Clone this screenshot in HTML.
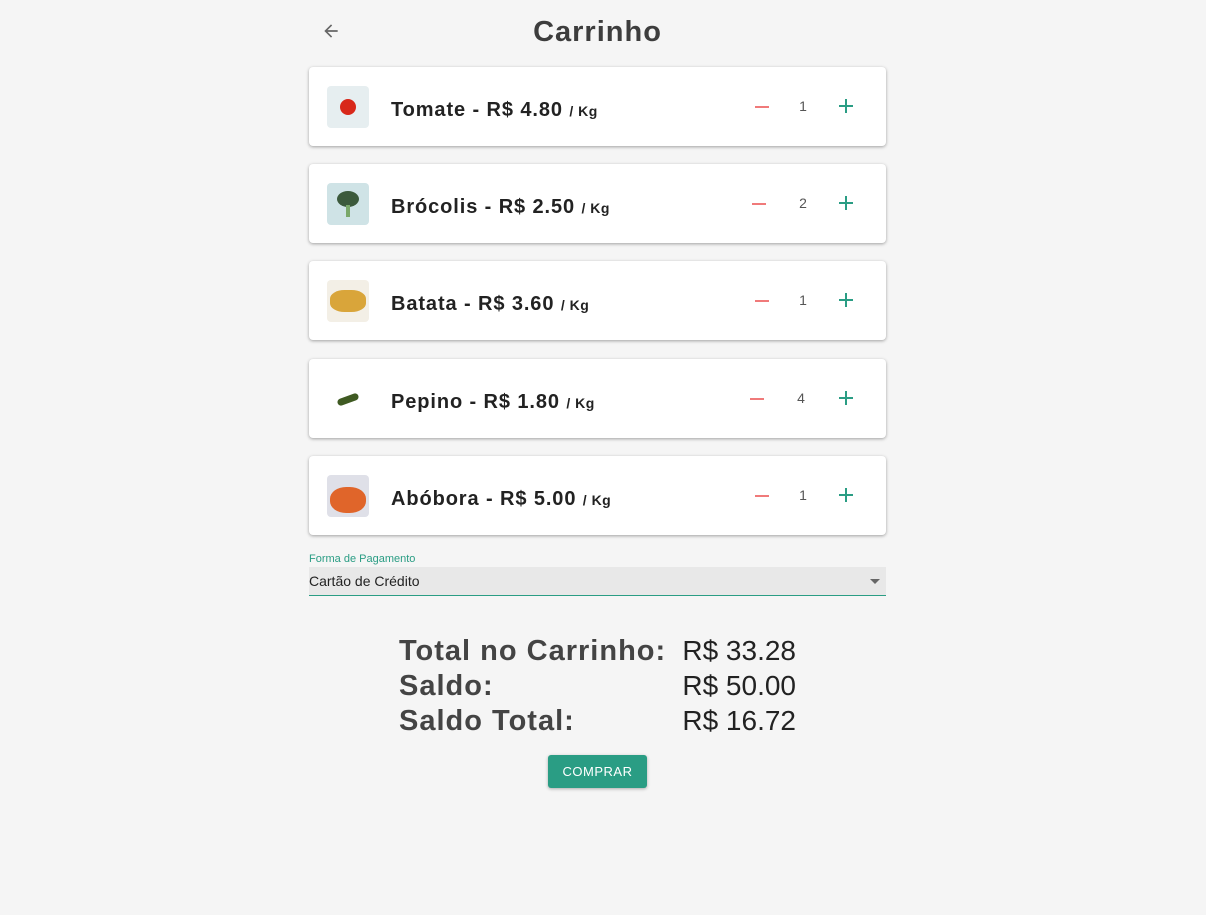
<!DOCTYPE html><html><head><meta charset="utf-8"><style>
body{margin:0;background:#f5f5f5;width:1206px;height:915px;font-family:"Liberation Sans",sans-serif;position:relative;overflow:hidden}
.a{position:absolute}
.card{position:absolute;left:309px;width:577px;height:79px;background:#fff;border-radius:4px;box-shadow:0 1px 3px rgba(0,0,0,.35)}
.img{position:absolute;left:18px;top:19px;width:42px;height:42px;border-radius:4px;background:#e6eef0;overflow:hidden}
.nm{position:absolute;left:82px;top:32px;font-size:20px;font-weight:bold;color:#222;white-space:nowrap;letter-spacing:0.9px}
.nm small{font-size:14px;letter-spacing:0.5px}
.mi{position:absolute;left:446px;top:39px;width:14px;height:2px;background:#f07a7a}
.q{position:absolute;left:488px;top:31px;font-size:14px;color:#555;width:12px;text-align:center}
.pl{position:absolute;left:530px;top:32px;width:14px;height:14px}
.pl:before{content:"";position:absolute;left:0;top:6px;width:14px;height:2px;background:#2a9d84}
.pl:after{content:"";position:absolute;left:6px;top:0;width:2px;height:14px;background:#2a9d84}
.lb{position:absolute;left:399px;font-size:29px;font-weight:bold;color:#444;letter-spacing:1px}
.vl{position:absolute;right:410px;font-size:28px;color:#222}
</style></head><body>
<svg class="a" style="left:321px;top:21px" width="20" height="20" viewBox="0 0 24 24"><path d="M20 11H7.8l5.6-5.6L12 4l-8 8 8 8 1.4-1.4L7.8 13H20z" fill="#666"/></svg>
<div class="a" style="left:0;width:1195px;top:16px;text-align:center;font-size:29px;font-weight:bold;color:#3d3d3d;letter-spacing:1px">Carrinho</div>

<div class="card" style="top:67px"><div class="img"><div class="a" style="left:13px;top:13px;width:16px;height:16px;border-radius:50%;background:#d8281a"></div></div><div class="nm">Tomate - R$ 4.80 <small>/ Kg</small></div><div class="mi"></div><div class="q">1</div><div class="pl"></div></div>
<div class="card" style="top:164px"><div class="img" style="background:#cfe3e6"><div class="a" style="left:10px;top:8px;width:22px;height:16px;border-radius:50%;background:#3c5a3c"></div><div class="a" style="left:19px;top:22px;width:4px;height:12px;background:#7aa86a"></div></div><div class="nm">Brócolis - R$ 2.50 <small>/ Kg</small></div><div class="mi" style="left:443px"></div><div class="q">2</div><div class="pl"></div></div>
<div class="card" style="top:261px"><div class="img" style="background:#f3efe6"><div class="a" style="left:3px;top:10px;width:36px;height:22px;border-radius:40%;background:#d9a53a"></div></div><div class="nm">Batata - R$ 3.60 <small>/ Kg</small></div><div class="mi"></div><div class="q">1</div><div class="pl"></div></div>
<div class="card" style="top:359px"><div class="img" style="background:#fff"><div class="a" style="left:10px;top:18px;width:22px;height:7px;border-radius:4px;background:#3f5a22;transform:rotate(-20deg)"></div></div><div class="nm">Pepino - R$ 1.80 <small>/ Kg</small></div><div class="mi" style="left:441px"></div><div class="q" style="left:486px">4</div><div class="pl"></div></div>
<div class="card" style="top:456px"><div class="img" style="background:#dfe0e8"><div class="a" style="left:3px;top:12px;width:36px;height:26px;border-radius:45%;background:#e0652a"></div></div><div class="nm">Abóbora - R$ 5.00 <small>/ Kg</small></div><div class="mi"></div><div class="q">1</div><div class="pl"></div></div>

<div class="a" style="left:309px;top:553px;font-size:11px;color:#2a9d84">Forma de Pagamento</div>
<div class="a" style="left:309px;top:567px;width:577px;height:28px;background:#e8e8e8;border-bottom:1px solid #2a9d84"></div>
<div class="a" style="left:309px;top:573px;font-size:14px;color:#222">Cartão de Crédito</div>
<div class="a" style="left:870px;top:579px;border-left:5px solid transparent;border-right:5px solid transparent;border-top:5px solid #666"></div>

<div class="lb" style="top:635px">Total no Carrinho:</div><div class="vl" style="top:635px">R$ 33.28</div>
<div class="lb" style="top:670px">Saldo:</div><div class="vl" style="top:670px">R$ 50.00</div>
<div class="lb" style="top:705px">Saldo Total:</div><div class="vl" style="top:705px">R$ 16.72</div>

<div class="a" style="left:548px;top:755px;width:99px;height:33px;background:#2a9d84;border-radius:3px;box-shadow:0 1px 3px rgba(0,0,0,.3);color:#fff;font-size:13px;line-height:33px;text-align:center;letter-spacing:0.5px">COMPRAR</div>
</body></html>
